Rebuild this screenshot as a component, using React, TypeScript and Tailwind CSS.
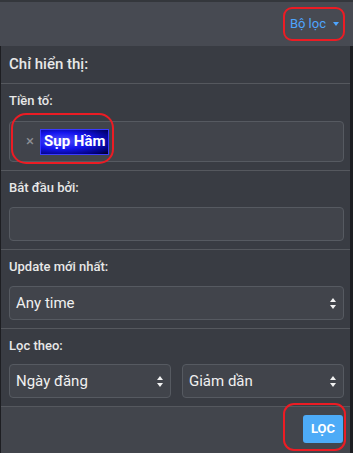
import { useState } from "react";

function Arrows() {
  return (
    <svg width="6" height="11" viewBox="0 0 6 11" className="shrink-0">
      <path d="M3 0L6 4H0Z" fill="#f2f2f2" />
      <path d="M3 11L6 7H0Z" fill="#f2f2f2" />
    </svg>
  );
}

function FakeSelect({ value, className }: { value: string; className?: string }) {
  return (
    <div
      className={`h-[34px] flex items-center justify-between pl-[6px] pr-[7px] bg-[#41444b] border border-[#565a61] rounded-[4px] text-[15px] text-[#f0f0f0] ${className ?? ""}`}
    >
      <span>{value}</span>
      <Arrows />
    </div>
  );
}

export default function App() {
  const [prefix] = useState("Sụp Hầm");

  return (
    <div
      className="relative w-[353px] h-[453px] overflow-hidden bg-[#1d1e22]"
      style={{ fontFamily: "Roboto, 'Noto Sans', sans-serif" }}
    >
      {/* thanh trên */}
      <div className="h-[46px] bg-[#474a52] border-t-2 border-[#34373c] flex items-center justify-end pr-[14px]">
        <button className="flex items-center gap-[7px] text-[13px] text-[#4ea5ff]">
          Bộ lọc
          <svg width="6" height="4" viewBox="0 0 6 4">
            <path d="M0 0H6L3 4Z" fill="#4ea5ff" />
          </svg>
        </button>
      </div>

      {/* panel lọc */}
      <div className="ml-[1px] w-[349px] h-[407px] bg-[#393c43] text-[#e8e8e8] flex flex-col">
        <div className="h-[38px] flex items-center px-[8px] text-[15px] font-medium border-b border-[#55585e]">
          Chỉ hiển thị:
        </div>

        <div className="pt-[8px] pb-[8px] pl-[8px] pr-[6px] border-b border-[#55585e]">
          <div className="h-[17px] flex items-center text-[13px] font-medium">Tiền tố:</div>
          <div className="mt-[12px] h-[41px] flex items-center gap-[6px] pl-[16px] bg-[#41444b] border border-[#565a61] rounded-[4px]">
            <span className="text-[#8d9096] text-[15px] leading-none">×</span>
            <span className="h-[26px] px-[3px] flex items-center text-[15px] font-bold text-white border border-[#3a3aff] bg-[radial-gradient(ellipse_at_30%_45%,#5050ff_0%,#1414ee_45%,#000070_85%,#000010_100%)]">
              {prefix}
            </span>
          </div>
        </div>

        <div className="pt-[8px] pb-[8px] pl-[8px] pr-[6px] border-b border-[#55585e]">
          <div className="h-[17px] flex items-center text-[13px] font-medium">Bắt đầu bởi:</div>
          <div className="mt-[11px] h-[34px] bg-[#41444b] border border-[#565a61] rounded-[4px]" />
        </div>

        <div className="pt-[8px] pb-[8px] pl-[8px] pr-[6px] border-b border-[#55585e]">
          <div className="h-[17px] flex items-center text-[13px] font-medium">Update mới nhất:</div>
          <FakeSelect value="Any time" className="mt-[11px]" />
        </div>

        <div className="pt-[8px] pb-[8px] pl-[8px] pr-[6px] border-b border-[#55585e]">
          <div className="h-[17px] flex items-center text-[13px] font-medium">Lọc theo:</div>
          <div className="mt-[10px] grid grid-cols-2 gap-[11px]">
            <FakeSelect value="Ngày đăng" />
            <FakeSelect value="Giảm dần" />
          </div>
        </div>

        <div className="flex-1 bg-[#42454c] flex justify-end items-start pt-[8px] pr-[7px]">
          <button className="w-[40px] h-[28px] rounded-[3px] bg-[#4dabf7] text-white text-[13px] font-bold">
            LỌC
          </button>
        </div>
      </div>

      {/* đánh dấu màu đỏ */}
      <div className="absolute left-[283px] top-[7px] w-[62px] h-[34px] border-2 border-[#ec1c24] rounded-[9px]" />
      <div className="absolute left-[11px] top-[113px] w-[103px] h-[51px] border-2 border-[#ec1c24] rounded-[15px]" />
      <div className="absolute left-[283px] top-[403px] w-[63px] h-[48px] border-2 border-[#ec1c24] rounded-[11px]" />
    </div>
  );
}
